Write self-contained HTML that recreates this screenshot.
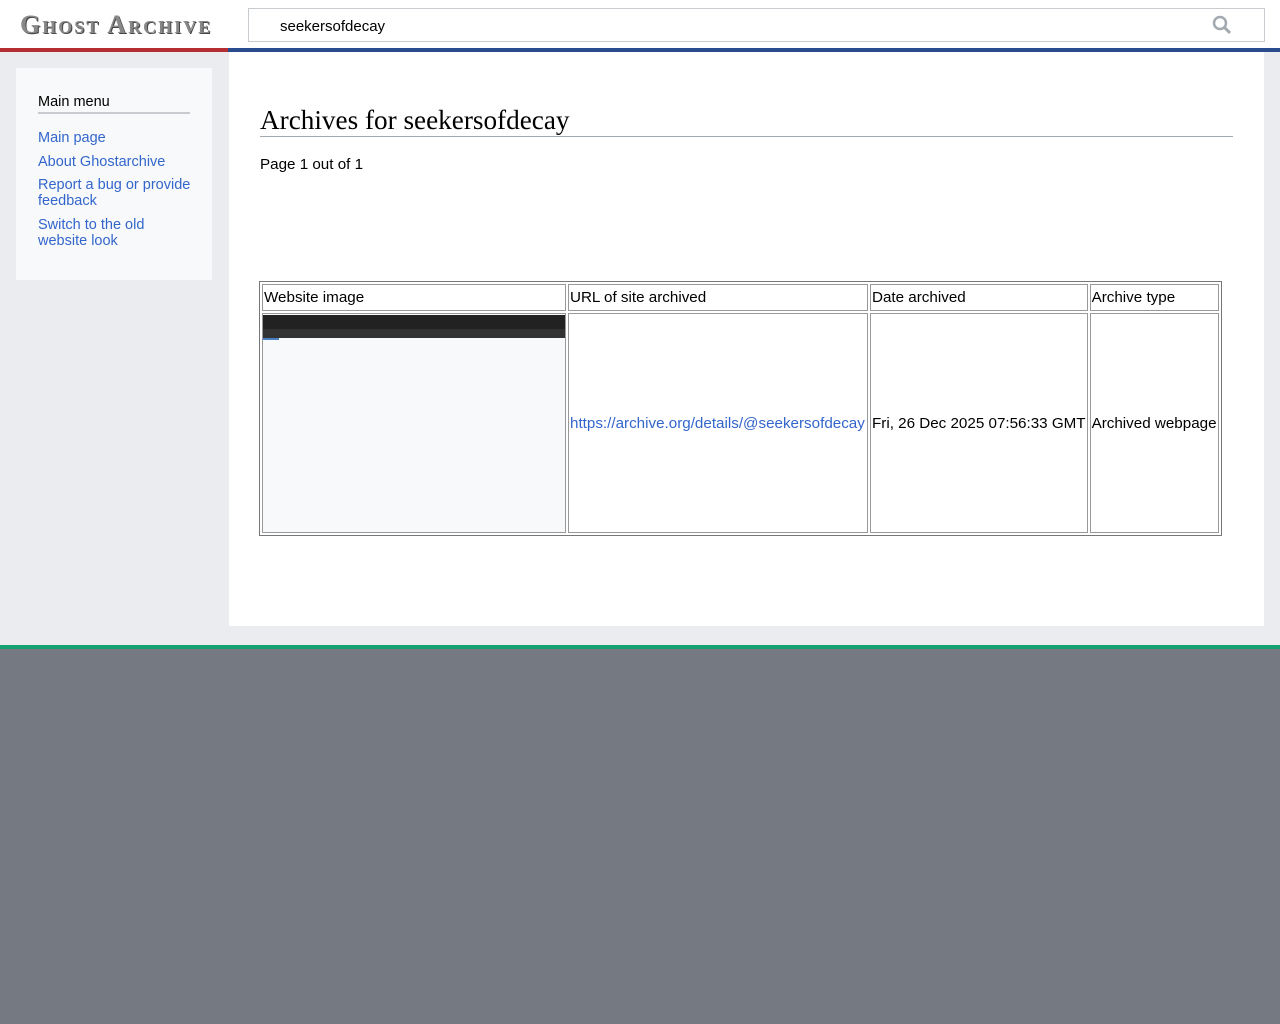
<!DOCTYPE html>
<html><head><meta charset="utf-8"><style>
body{margin:0;width:1280px;height:1024px;background:#eaecf0;font-family:"Liberation Sans",sans-serif;position:relative;overflow:hidden}
.hdr{position:absolute;left:0;top:0;width:1280px;height:48px;background:#fff}
.logo{position:absolute;left:20px;top:10px;font-family:"Liberation Serif",serif;font-size:26px;color:#888;letter-spacing:2px;font-weight:bold;font-variant:small-caps;text-shadow:1px 1px 0 #444}
.search{position:absolute;left:248px;top:8px;width:1017px;height:34px;border:1px solid #c8ccd1;background:#fff;box-sizing:border-box}
.search span{position:absolute;left:31px;top:9px;font-size:15px;color:#000}
.red{position:absolute;left:0;top:48px;width:228px;height:4px;background:#b52e31}
.blue{position:absolute;left:228px;top:48px;width:1052px;height:4px;background:#2a4b8d}
.side{position:absolute;left:16px;top:68px;width:196px;height:212px;background:#f8f9fa}
.side h3{position:absolute;left:22px;top:26px;margin:0;font-weight:normal;font-size:14.5px;width:152px;border-bottom:2px solid #c8ccd1;padding-bottom:2px}
.side a{position:absolute;left:22px;color:#3366cc;font-size:14.5px;line-height:16px;text-decoration:none;width:160px}
.main{position:absolute;left:229px;top:52px;width:1035px;height:574px;background:#fff}
h1{position:absolute;left:31px;top:53px;margin:0;font-family:"Liberation Serif",serif;font-weight:normal;font-size:27.2px;width:973px;border-bottom:1px solid #a2a9b1;line-height:31px}
.pg{position:absolute;left:31px;top:104px;font-size:15.2px}
table{position:absolute;left:30px;top:229px;border:1px solid #777;border-collapse:separate;border-spacing:2px;font-size:15.2px}
td{border:1px solid #999;padding:1px 1px;white-space:nowrap}
.foot{position:absolute;left:0;top:645px;width:1280px;height:379px;background:#757981;border-top:4px solid #15a16f;box-sizing:border-box}
</style></head><body>
<div class="hdr"><div class="logo">Ghost Archive</div>
<div class="search"><span>seekersofdecay</span>
<svg style="position:absolute;left:963px;top:6px" width="20" height="20" viewBox="0 0 20 20"><circle cx="8" cy="8" r="6" fill="none" stroke="#a2a9b1" stroke-width="2.5"/><path d="M12.5 12.5L18 18" stroke="#a2a9b1" stroke-width="3"/></svg></div></div>
<div class="red"></div><div class="blue"></div>
<div class="side"><h3>Main menu</h3>
<a style="top:62px">Main page</a><a style="top:86px">About Ghostarchive</a><a style="top:109px">Report a bug or provide feedback</a><a style="top:149px;width:125px">Switch to the old website look</a></div>
<div class="main"><h1>Archives for seekersofdecay</h1><div class="pg">Page 1 out of 1</div>
<table><tr style="height:27px"><td style="width:300px">Website image</td><td style="width:296px">URL of site archived</td><td style="width:213px">Date archived</td><td style="width:125px">Archive type</td></tr>
<tr style="height:219px"><td style="vertical-align:top;padding:0;background:#f8f9fb"><div style="height:14px;background:#222;margin:1px 0 0"></div><div style="height:9px;background:#333"></div><div style="width:16px;height:2px;background:#4a7fc0"></div><div style="height:192px"></div></td>
<td><span style="color:#3366cc">https://archive.org/details/@seekersofdecay</span></td><td>Fri, 26 Dec 2025 07:56:33 GMT</td><td>Archived webpage</td></tr></table></div>
<div class="foot"></div>
</body></html>
